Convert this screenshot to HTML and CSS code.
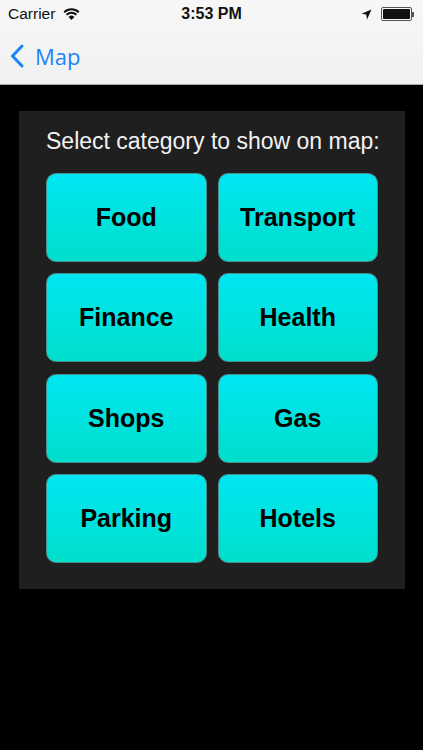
FILE: index.html
```html
<!DOCTYPE html>
<html lang="en">
<head>
    <meta charset="UTF-8">
    <meta name="viewport" content="width=device-width, initial-scale=1.0">
    <title>Categories</title>
    <link rel="stylesheet" href="styles.css">
</head>
<body>
    <div class="header">
        <div class="status-bar">
            <div class="status-left">
                <span>Carrier</span>
                <svg class="wifi" width="17" height="12" viewBox="0 0 17 12">
                    <path d="M8.5 12 L5.6 8.9 A4.2 4.2 0 0 1 11.4 8.9 Z" fill="#111"/>
                    <path d="M3.6 6.8 A7 7 0 0 1 13.4 6.8" stroke="#111" stroke-width="2" fill="none"/>
                    <path d="M1.2 4.2 A10.5 10.5 0 0 1 15.8 4.2" stroke="#111" stroke-width="2" fill="none"/>
                </svg>
            </div>
            <div class="status-time">3:53 PM</div>
            <div class="status-right">
                <svg width="11" height="11" viewBox="0 0 11 11">
                    <path d="M10.5 0.5 L0.5 4.8 L5.2 5.6 L6 10.5 Z" fill="#111"/>
                </svg>
                <div class="battery"><div class="battery-fill"></div></div>
                <div class="battery-tip"></div>
            </div>
        </div>
        <div class="nav-bar">
            <svg class="back-chevron" width="14" height="24" viewBox="0 0 14 24">
                <path d="M12 2 L2.5 12 L12 22" stroke="#1a84f8" stroke-width="3" fill="none" stroke-linecap="round" stroke-linejoin="round"/>
            </svg>
            <span class="back-label">Map</span>
        </div>
    </div>

    <div class="content">
        <div class="panel">
            <div class="panel-title">Select category to show on map:</div>
            <div class="category-grid">
                <button class="category">Food</button>
                <button class="category">Transport</button>
                <button class="category">Finance</button>
                <button class="category">Health</button>
                <button class="category">Shops</button>
                <button class="category">Gas</button>
                <button class="category">Parking</button>
                <button class="category">Hotels</button>
            </div>
        </div>
    </div>
</body>
</html>
```

FILE: styles.css
```css
body {
    margin: 0;
    background: #000;
    font-family: "Liberation Sans", Arial, sans-serif;
    width: 423px;
    height: 750px;
    overflow: hidden;
}
.header {
    background: linear-gradient(#f7f7f7, #f1f1f1);
    border-bottom: 1px solid #a8a8a8;
    height: 84px;
}
.status-bar {
    height: 28px;
    display: flex;
    align-items: center;
    justify-content: space-between;
    padding: 0 8px;
    font-size: 15.5px;
    color: #111;
}
.status-left {
    display: flex;
    align-items: center;
    gap: 8px;
    width: 120px;
}
.status-time {
    font-weight: bold;
    font-size: 16px;
}
.status-right {
    display: flex;
    align-items: center;
    justify-content: flex-end;
    width: 120px;
}
.status-right svg {
    margin-right: 9px;
}
.battery {
    width: 27px;
    height: 10px;
    border: 1px solid #555;
    border-radius: 2px;
    padding: 1px;
}
.battery-fill {
    background: #111;
    height: 100%;
    border-radius: 1px;
}
.battery-tip {
    width: 2px;
    height: 5px;
    background: #555;
    margin-right: 1px;
}
.nav-bar {
    height: 56px;
    display: flex;
    align-items: center;
    padding-left: 10px;
}
.back-chevron {
    margin-right: 11px;
}
.back-label {
    color: #1a84f8;
    font-size: 22px;
    font-family: "Open Sans", "Liberation Sans", sans-serif;
}
.content {
    padding: 26px 18px 0 19px;
}
.panel {
    background: #1f1f1f;
    padding: 17px 27px 26px 27px;
}
.panel-title {
    color: #f2f2f2;
    font-size: 23px;
    line-height: 26px;
    text-align: center;
    margin-bottom: 19px;
    white-space: nowrap;
}
.category-grid {
    display: grid;
    grid-template-columns: 1fr 1fr;
    column-gap: 11px;
    row-gap: 11.3px;
}
.category {
    height: 89px;
    border: 1px solid #4a8f8c;
    border-radius: 10px;
    background: linear-gradient(#00e6f2, #00dfcb);
    font-family: "Liberation Sans", Arial, sans-serif;
    font-weight: bold;
    font-size: 25px;
    color: #000;
    cursor: pointer;
    padding: 0;
}
```
